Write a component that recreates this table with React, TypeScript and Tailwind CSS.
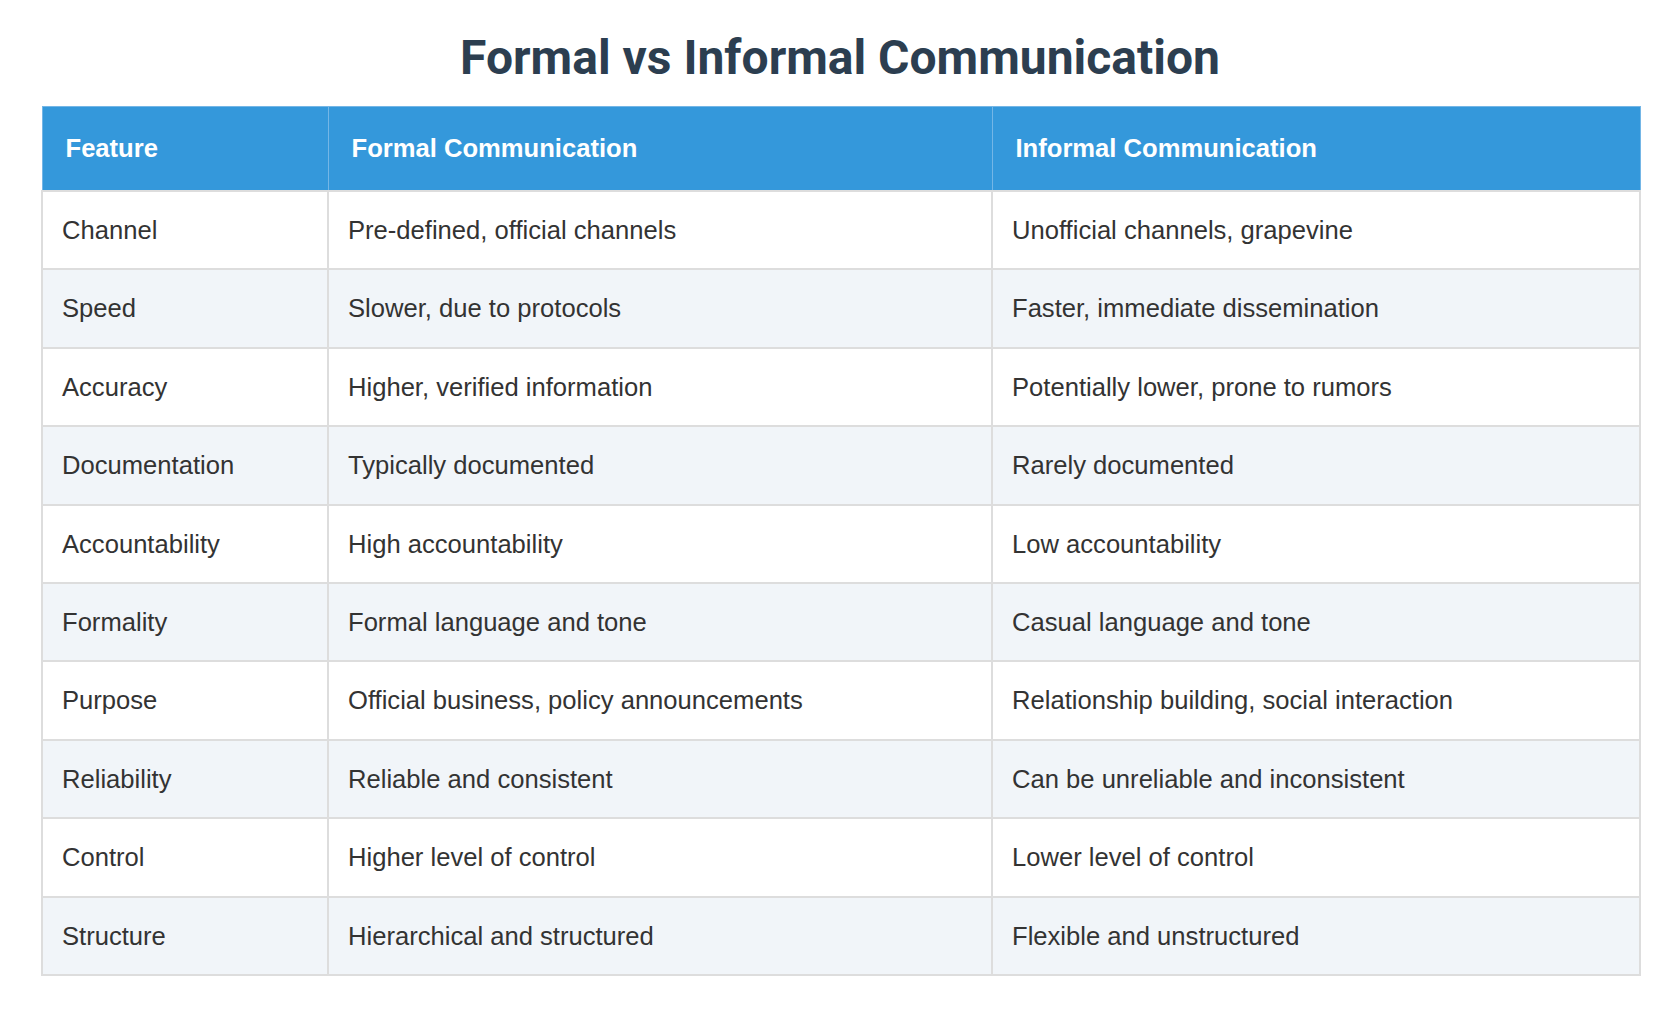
const rows: [string, string, string][] = [
  ["Channel", "Pre-defined, official channels", "Unofficial channels, grapevine"],
  ["Speed", "Slower, due to protocols", "Faster, immediate dissemination"],
  ["Accuracy", "Higher, verified information", "Potentially lower, prone to rumors"],
  ["Documentation", "Typically documented", "Rarely documented"],
  ["Accountability", "High accountability", "Low accountability"],
  ["Formality", "Formal language and tone", "Casual language and tone"],
  ["Purpose", "Official business, policy announcements", "Relationship building, social interaction"],
  ["Reliability", "Reliable and consistent", "Can be unreliable and inconsistent"],
  ["Control", "Higher level of control", "Lower level of control"],
  ["Structure", "Hierarchical and structured", "Flexible and unstructured"],
];

const headers = ["Feature", "Formal Communication", "Informal Communication"];

export default function App() {
  return (
    <div className="min-h-screen bg-white pt-[30px] font-['Liberation_Sans',Arial,sans-serif] text-[#333333]">
      <h1 className="mb-[20px] text-center font-['Roboto',sans-serif] text-[48px] font-bold leading-[56px] text-[#2c3e50]">
        Formal vs Informal Communication
      </h1>
      <table className="mx-[41px] w-[1598px] table-fixed border-collapse text-[25.6px]">
        <colgroup>
          <col className="w-[286px]" />
          <col className="w-[664px]" />
          <col className="w-[648px]" />
        </colgroup>
        <thead>
          <tr>
            {headers.map((h) => (
              <th
                key={h}
                className="border border-[#74b6e6] bg-[#3498db] px-[23px] py-[27px] text-left font-bold leading-[29px] text-white"
              >
                {h}
              </th>
            ))}
          </tr>
        </thead>
        <tbody>
          {rows.map((r, i) => (
            <tr key={r[0]} className={i % 2 === 1 ? "bg-[#f1f5f9]" : "bg-white"}>
              {r.map((c, j) => (
                <td
                  key={j}
                  className="border-2 border-[#dddddd] px-[19px] py-[24px] leading-[28.4px]"
                >
                  {c}
                </td>
              ))}
            </tr>
          ))}
        </tbody>
      </table>
    </div>
  );
}
